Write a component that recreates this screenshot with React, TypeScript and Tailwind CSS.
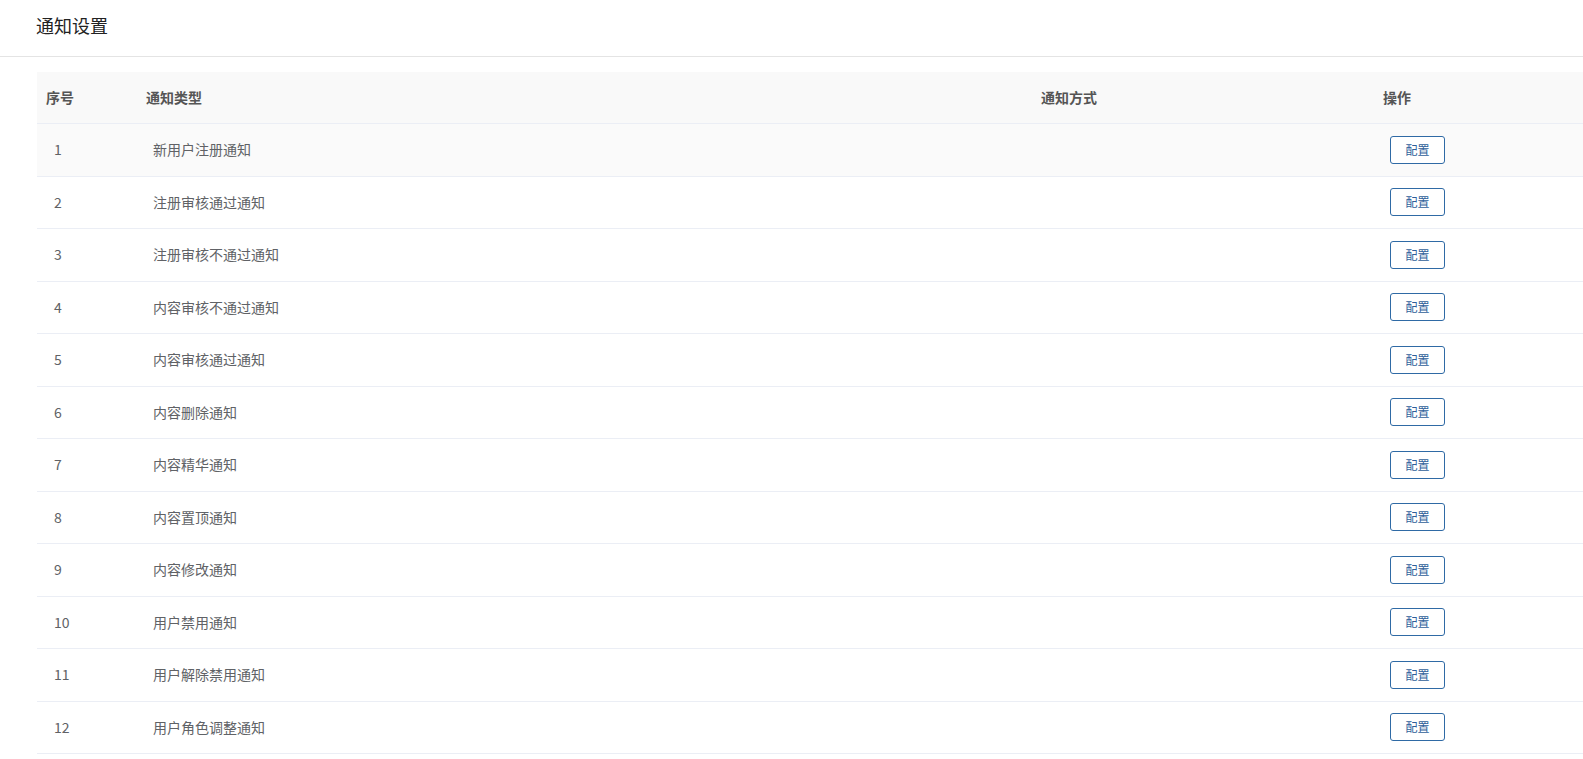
import React from 'react';

const rows = [
  '新用户注册通知',
  '注册审核通过通知',
  '注册审核不通过通知',
  '内容审核不通过通知',
  '内容审核通过通知',
  '内容删除通知',
  '内容精华通知',
  '内容置顶通知',
  '内容修改通知',
  '用户禁用通知',
  '用户解除禁用通知',
  '用户角色调整通知',
];

const font = {
  fontFamily: '"Microsoft YaHei", "Noto Sans CJK SC", "Liberation Sans", sans-serif',
};

export default function App() {
  return (
    <div className="min-h-screen bg-white" style={font}>
      {/* Page header */}
      <div className="h-[57px] border-b border-[#e4e4e4] flex items-center pl-[36px]">
        <h1 className="text-[18px] leading-none text-[#222] -mt-[7px]">通知设置</h1>
      </div>

      {/* Table */}
      <div className="pt-[15px] pl-[37px]">
        <div className="grid grid-cols-[99px_895px_342px_1fr] h-[52px] items-center bg-[#f9f9f9] border-b border-[#ebeef5] text-[14px] font-bold text-[#555]">
          <div className="pl-[9px]">序号</div>
          <div className="pl-[10px]">通知类型</div>
          <div className="pl-[10px]">通知方式</div>
          <div className="pl-[10px]">操作</div>
        </div>
        {rows.map((name, i) => (
          <div
            key={i}
            className={
              'grid grid-cols-[99px_895px_342px_1fr] h-[52.5px] items-center border-b border-[#ebeef5] text-[14px] text-[#606266] ' +
              (i === 0 ? 'bg-[#fafafa]' : 'bg-white')
            }
          >
            <div className="pl-[17px]">{i + 1}</div>
            <div className="pl-[17px]">{name}</div>
            <div />
            <div className="pl-[17px]">
              <button className="w-[55px] h-[28px] border border-[#2f6aa5] rounded-[3px] bg-white text-[12px] text-[#2f5f9a] leading-none">
                配置
              </button>
            </div>
          </div>
        ))}
      </div>
    </div>
  );
}
